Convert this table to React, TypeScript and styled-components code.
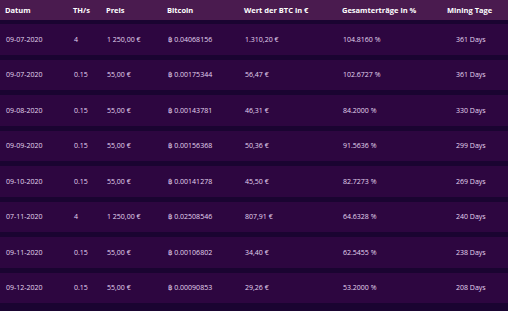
import React from "react";
import styled, { createGlobalStyle } from "styled-components";

const GlobalStyle = createGlobalStyle`
  html, body {
    margin: 0;
    padding: 0;
    background: #1a0431;
    font-family: "Open Sans", "DejaVu Sans", sans-serif;
  }
`;

const COLUMNS = "68px 33px 61px 77px 98px 105px 1fr";

const Table = styled.div`
  width: 508px;
  height: 311px;
  overflow: hidden;
  background: #1a0431;
`;

const HeaderRow = styled.div`
  display: grid;
  grid-template-columns: ${COLUMNS};
  align-items: center;
  height: 19.5px;
  padding-left: 5px;
  background: #4a1b4f;
`;

const HeaderCell = styled.div`
  color: #ffffff;
  font-size: 7.5px;
  font-weight: 700;
  white-space: nowrap;
`;

const Body = styled.div`
  display: flex;
  flex-direction: column;
  gap: 5px;
  padding-top: 4.5px;
`;

const Row = styled.div`
  display: grid;
  grid-template-columns: ${COLUMNS};
  align-items: center;
  height: 30.5px;
  padding-left: 6px;
  background: #2d0640;
`;

const Cell = styled.div<{ indent?: number }>`
  color: #e4d6f0;
  font-size: 7px;
  white-space: nowrap;
  padding-left: ${({ indent }) => indent ?? 0}px;
`;

const rows = [
  ["09-07-2020", "4", "1 250,00 €", "฿ 0.04068156", "1.310,20 €", "104.8160 %", "361 Days"],
  ["09-07-2020", "0.15", "55,00 €", "฿ 0.00175344", "56,47 €", "102.6727 %", "361 Days"],
  ["09-08-2020", "0.15", "55,00 €", "฿ 0.00143781", "46,31 €", "84.2000 %", "330 Days"],
  ["09-09-2020", "0.15", "55,00 €", "฿ 0.00156368", "50,36 €", "91.5636 %", "299 Days"],
  ["09-10-2020", "0.15", "55,00 €", "฿ 0.00141278", "45,50 €", "82.7273 %", "269 Days"],
  ["07-11-2020", "4", "1 250,00 €", "฿ 0.02508546", "807,91 €", "64.6328 %", "240 Days"],
  ["09-11-2020", "0.15", "55,00 €", "฿ 0.00106802", "34,40 €", "62.5455 %", "238 Days"],
  ["09-12-2020", "0.15", "55,00 €", "฿ 0.00090853", "29,26 €", "53.2000 %", "208 Days"],
];

const headers = ["Datum", "TH/s", "Preis", "Bitcoin", "Wert der BTC in €", "Gesamterträge in %", "Mining Tage"];

export default function App() {
  return (
    <>
      <GlobalStyle />
      <Table>
        <HeaderRow>
          {headers.map((h) => (
            <HeaderCell key={h}>{h}</HeaderCell>
          ))}
        </HeaderRow>
        <Body>
          {rows.map((r, ri) => (
            <Row key={ri}>
              {r.map((c, ci) => (
                <Cell key={ci} indent={ci === r.length - 1 ? 8 : 0}>
                  {c}
                </Cell>
              ))}
            </Row>
          ))}
        </Body>
      </Table>
    </>
  );
}
